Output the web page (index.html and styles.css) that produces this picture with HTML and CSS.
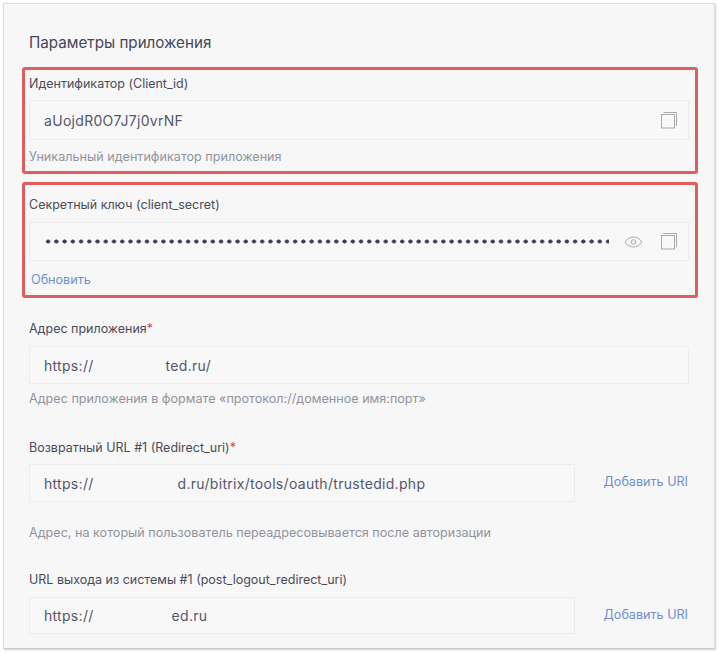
FILE: index.html
```html
<!DOCTYPE html>
<html>

<head>
    <meta charset="utf-8">
    <meta name="viewport" content="width=device-width,initial-scale=1.0">
    <title>Параметры приложения</title>
    <link rel="stylesheet" href="styles.css">
</head>

<body>
    <div class="card">
        <h2 class="title">Параметры приложения</h2>

        <div class="field-marked first">
            <div class="label">Идентификатор (Client_id)</div>
            <div class="input">
                <span class="value">aUojdR0O7J7j0vrNF</span>
                <svg class="icon" width="17" height="17" viewBox="0 0 17 17"><use href="#copy"></use></svg>
            </div>
            <div class="hint hint-tight">Уникальный идентификатор приложения</div>
        </div>

        <div class="field-marked second">
            <div class="label">Секретный ключ (client_secret)</div>
            <div class="input">
                <span class="dots"></span>
                <svg class="icon eye" width="19" height="12" viewBox="0 0 19 12">
                    <path d="M1 6C3.500 2.600 6.200 1 9.500 1S15.500 2.600 18 6C15.500 9.400 12.800 11 9.500 11S3.500 9.400 1 6Z" fill="none" stroke="#a9a9ad"/>
                    <circle cx="9.500" cy="6" r="2.300" fill="none" stroke="#a9a9ad"/>
                </svg>
                <svg class="icon" width="17" height="17" viewBox="0 0 17 17"><use href="#copy"></use></svg>
            </div>
            <a class="link refresh">Обновить</a>
        </div>

        <div class="field address">
            <div class="label">Адрес приложения<span class="req">*</span></div>
            <div class="input short">
                <span class="value">https://<span class="hidden-a">ted.ru/</span></span>
            </div>
            <div class="hint hint-low">Адрес приложения в формате «протокол://доменное имя:порт»</div>
        </div>

        <div class="field redirect">
            <div class="label">Возвратный URL #1 (Redirect_uri)<span class="req">*</span></div>
            <div class="row">
                <div class="input short">
                    <span class="value">https://<span class="hidden-b">d.ru/bitrix/tools/oauth/trustedid.php</span></span>
                </div>
                <a class="link">Добавить URI</a>
            </div>
            <div class="hint hint-wide">Адрес, на который пользователь переадресовывается после авторизации</div>
        </div>

        <div class="field logout">
            <div class="label">URL выхода из системы #1 (post_logout_redirect_uri)</div>
            <div class="row row-loose">
                <div class="input shorter">
                    <span class="value">https://<span class="hidden-c">ed.ru</span></span>
                </div>
                <a class="link">Добавить URI</a>
            </div>
        </div>
    </div>

    <svg width="0" height="0" class="defs">
        <symbol id="copy" viewBox="0 0 17 17">
            <rect x="0.500" y="2.500" width="13" height="13.500" fill="none" stroke="#a9a9ad"/>
            <path d="M2.500 0.500H15.500V14" fill="none" stroke="#a9a9ad"/>
        </symbol>
    </svg>
</body>

</html>
```

FILE: styles.css
```css
html,
body {
    margin: 0;
    padding: 0;
    height: 100%;
    background: #fff;
    overflow: hidden;
}

body {
    font-family: Inter, "Liberation Sans", Arial, sans-serif;
    color: #3a3b4a;
    padding: 3px 4px 0 3px;
    box-sizing: border-box;
}

.card {
    height: 646px;
    box-sizing: border-box;
    padding: 30px 16px 0 18px;
    background: #f7f7f8;
    border: 1px solid #dcdcdc;
    border-bottom-color: #c9c9c9;
    box-shadow: 1px 1px 2px rgba(0, 0, 0, .18);
    overflow: hidden;
}

.title {
    margin: 0;
    font-size: 15.200px;
    line-height: 18px;
    font-weight: 400;
    padding-left: 7px;
    color: #45465a;
}

.field-marked {
    border: 3px solid #df5d5f;
    border-radius: 3px;
    padding: 0 6px 0 4px;
    box-sizing: border-box;
}

.first {
    margin-top: 15px;
    height: 107px;
    padding-top: 6px;
}

.first .input {
    margin-top: 8px;
}

.second {
    margin-top: 8px;
    height: 116px;
    padding-top: 12px;
}

.second .input {
    height: 39px;
}

.field {
    padding: 0 9px 0 7px;
}

.label {
    font-size: 12.500px;
    line-height: 16px;
    color: #4a4b59;
}

.req {
    color: #e0454a;
}

.input {
    display: flex;
    align-items: center;
    flex: 1;
    height: 40px;
    margin-top: 9px;
    padding: 0 10px 0 14px;
    box-sizing: border-box;
    background: #f8f8f9;
    border: 1px solid #ececee;
}

.short {
    height: 38px;
}

.shorter {
    height: 37px;
}

.value {
    flex: 1;
    font-size: 14px;
    letter-spacing: .3px;
    color: #55566a;
    white-space: nowrap;
}

.dots {
    flex: 1;
    height: 5px;
    margin-right: 15px;
    background-image: radial-gradient(circle, #3b3d5a 1.800px, transparent 2.300px);
    background-size: 8.240px 5px;
    background-repeat: repeat-x;
}

.icon {
    display: block;
}

.eye {
    margin-right: 18px;
}

.hint {
    margin-top: 6px;
    font-size: 12.600px;
    line-height: 16px;
    color: #92939c;
}

.hint-tight {
    margin-top: 9px;
}

.hint-low {
    margin-top: 7px;
}

.hint-wide {
    margin-top: 23px;
}

.link {
    font-size: 12.600px;
    line-height: 16px;
    padding-bottom: 2px;
    color: #6f8fd0;
    white-space: nowrap;
}

.refresh {
    display: block;
    margin: 11px 0 0 2px;
}

.row {
    display: flex;
    align-items: center;
    gap: 29px;
    margin-top: 8px;
    padding-right: 1px;
}

.row .input {
    margin-top: 0;
}

.row-loose {
    margin-top: 9px;
}

.address {
    margin-top: 23px;
}

.redirect {
    margin-top: 33px;
}

.logout {
    margin-top: 31px;
}

.hidden-a {
    margin-left: 72px;
}

.hidden-b {
    margin-left: 84px;
}

.hidden-c {
    margin-left: 78px;
}

.defs {
    position: absolute;
}
```
